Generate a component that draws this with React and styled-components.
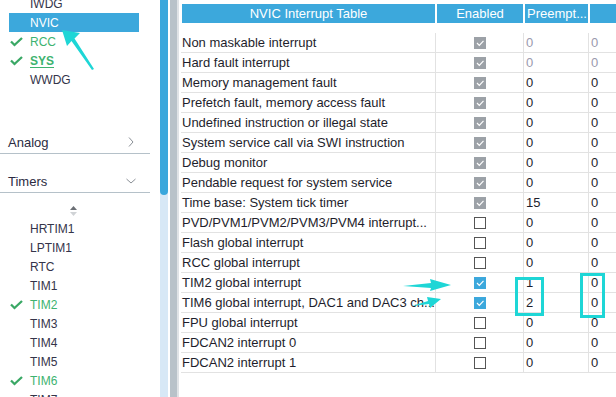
import React from 'react';
import styled, { createGlobalStyle } from 'styled-components';

const Global = createGlobalStyle`
  html, body { margin: 0; padding: 0; background: #fff; overflow: hidden; }
  body { font-family: "Liberation Sans", Arial, sans-serif; }
`;

const Shell = styled.div`
  position: relative;
  width: 616px;
  height: 397px;
  display: flex;
  overflow: hidden;
  background: #fff;
`;

const Sidebar = styled.div`
  width: 160px;
  flex: none;
  overflow: hidden;
  display: flex;
  flex-direction: column;
`;

const ItemList = styled.ul`
  list-style: none;
  margin: ${(p) => p.$mt || 0}px 0 0;
  padding: 0;
  flex: none;
`;

const Item = styled.li`
  display: flex;
  align-items: center;
  height: 19px;
  margin-left: 9px;
  width: 130px;
  padding-left: 1px;
  box-sizing: border-box;
  font-size: 12px;
  color: ${(p) => (p.$selected ? '#ffffff' : p.$ok ? '#3db370' : '#34344a')};
  background: ${(p) => (p.$selected ? '#3ca8dc' : 'transparent')};
  font-weight: ${(p) => (p.$bold ? 700 : 400)};
`;

const ItemLabel = styled.span`
  text-decoration: ${(p) => (p.$underline ? 'underline' : 'none')};
  text-decoration-thickness: 1px;
  text-underline-offset: 2px;
`;

const CheckSlot = styled.span`
  width: 20px;
  flex: none;
  display: flex;
  align-items: center;
`;

const Category = styled.div`
  display: flex;
  justify-content: space-between;
  align-items: center;
  width: 150px;
  box-sizing: border-box;
  height: 23px;
  padding: 0 14px 0 8px;
  margin-top: ${(p) => p.$mt}px;
  border-bottom: 1px solid #b5c1c9;
  font-size: 13px;
  color: #2b2b42;
  flex: none;
`;

const ScrollHint = styled.div`
  width: 146px;
  height: 26px;
  box-sizing: border-box;
  padding-top: 13px;
  display: flex;
  flex-direction: column;
  align-items: center;
  gap: 2px;
  flex: none;
`;

const ScrollTrack = styled.div`
  width: 8px;
  flex: none;
  background: #d7e8f6;
  margin-right: 2px;
`;

const ScrollThumb = styled.div`
  height: 195px;
  background: #3aa7dc;
  border-radius: 0 0 4px 4px;
`;

const Splitter = styled.div`
  width: 7px;
  flex: none;
  background: #b8c2c9;
  border-right: 2px solid #dfe3e6;
  margin-right: 2px;
`;

const TableArea = styled.div`
  flex: 1;
  min-width: 0;
  overflow: hidden;
  padding-top: 4px;
`;

const cols = '255px 88px 65px 80px';

const HeadRow = styled.div`
  display: grid;
  grid-template-columns: ${cols};
  height: 19px;
  margin-bottom: 10px;
`;

const HeadCell = styled.div`
  background: #3ca8dc;
  color: #fff;
  margin: 0 1px;
  font-size: 13px;
  line-height: 19px;
  text-align: ${(p) => p.$align || 'center'};
  padding-left: ${(p) => p.$pl || 0}px;
  white-space: nowrap;
  overflow: hidden;
`;

const Row = styled.div`
  display: grid;
  grid-template-columns: ${cols};
  height: 20px;
`;

const Cell = styled.div`
  box-sizing: border-box;
  height: 20px;
  border-bottom: 1px solid #e2e2e2;
  border-right: ${(p) => (p.$last ? 'none' : '1px solid #e2e2e2')};
  font-size: 13px;
  line-height: 19px;
  color: ${(p) => (p.$muted ? '#9a9aae' : '#1e1e2c')};
  padding-left: ${(p) => p.$pl || 0}px;
  white-space: nowrap;
  overflow: hidden;
  display: ${(p) => (p.$center ? 'flex' : 'block')};
  justify-content: center;
  align-items: center;
`;

const Box = styled.span`
  width: 12px;
  height: 12px;
  box-sizing: border-box;
  display: inline-flex;
  align-items: center;
  justify-content: center;
  background: ${(p) => (p.$state === 'locked' ? '#9ca1a7' : p.$state === 'on' ? '#3ca8dc' : '#ffffff')};
  border: ${(p) => (p.$state === 'off' ? '1.5px solid #555' : 'none')};
`;

const Overlay = styled.svg`
  position: absolute;
  left: 0;
  top: 0;
  pointer-events: none;
`;

const GreenCheck = () => (
  <svg width="13" height="10" viewBox="0 0 13 10">
    <polyline points="1,4.5 4.5,8 12,1" fill="none" stroke="#3aa865" strokeWidth="2.3" />
  </svg>
);

const Chevron = ({ down }) => (
  <svg width="10" height="10" viewBox="0 0 10 10">
    {down ? (
      <polyline points="0.5,3 5,7 9.5,3" fill="none" stroke="#8a8f96" strokeWidth="1" />
    ) : (
      <polyline points="3,0.5 7,5 3,9.5" fill="none" stroke="#8a8f96" strokeWidth="1" />
    )}
  </svg>
);

const Checkbox = ({ state }) => (
  <Box $state={state}>
    {state !== 'off' && (
      <svg width="12" height="12" viewBox="0 0 12 12">
        <polyline points="3,6 5.3,8.3 9.5,3.8" fill="none" stroke="#fff" strokeWidth="1.2" />
      </svg>
    )}
  </Box>
);

const sysItems = [
  { name: 'IWDG' },
  { name: 'NVIC', selected: true },
  { name: 'RCC', ok: true },
  { name: 'SYS', ok: true, bold: true },
  { name: 'WWDG' },
];

const timerItems = [
  { name: 'HRTIM1' },
  { name: 'LPTIM1' },
  { name: 'RTC' },
  { name: 'TIM1' },
  { name: 'TIM2', ok: true },
  { name: 'TIM3' },
  { name: 'TIM4' },
  { name: 'TIM5' },
  { name: 'TIM6', ok: true },
  { name: 'TIM7' },
];

const rows = [
  ['Non maskable interrupt', 'locked', '0', '0', true],
  ['Hard fault interrupt', 'locked', '0', '0', true],
  ['Memory management fault', 'locked', '0', '0'],
  ['Prefetch fault, memory access fault', 'locked', '0', '0'],
  ['Undefined instruction or illegal state', 'locked', '0', '0'],
  ['System service call via SWI instruction', 'locked', '0', '0'],
  ['Debug monitor', 'locked', '0', '0'],
  ['Pendable request for system service', 'locked', '0', '0'],
  ['Time base: System tick timer', 'locked', '15', '0'],
  ['PVD/PVM1/PVM2/PVM3/PVM4 interrupt...', 'off', '0', '0'],
  ['Flash global interrupt', 'off', '0', '0'],
  ['RCC global interrupt', 'off', '0', '0'],
  ['TIM2 global interrupt', 'on', '1', '0'],
  ['TIM6 global interrupt, DAC1 and DAC3 ch...', 'on', '2', '0'],
  ['FPU global interrupt', 'off', '0', '0'],
  ['FDCAN2 interrupt 0', 'off', '0', '0'],
  ['FDCAN2 interrupt 1', 'off', '0', '0'],
];

const renderItem = (it) => (
  <Item key={it.name} $selected={it.selected} $ok={it.ok} $bold={it.bold}>
    <CheckSlot>{it.ok && <GreenCheck />}</CheckSlot>
    <ItemLabel $underline={it.bold}>{it.name}</ItemLabel>
  </Item>
);

export default function App() {
  return (
    <>
      <Global />
      <Shell>
        <Sidebar>
          <ItemList $mt={-6}>{sysItems.map(renderItem)}</ItemList>
          <Category $mt={42}>
            <span>Analog</span>
            <Chevron />
          </Category>
          <Category $mt={16}>
            <span>Timers</span>
            <Chevron down />
          </Category>
          <ScrollHint>
            <svg width="7" height="4" viewBox="0 0 7 4">
              <polygon points="0,4 3.5,0 7,4" fill="#6b6f75" />
            </svg>
            <svg width="7" height="4" viewBox="0 0 7 4">
              <polygon points="0,0 3.5,4 7,0" fill="#d0d3d6" />
            </svg>
          </ScrollHint>
          <ItemList>{timerItems.map(renderItem)}</ItemList>
        </Sidebar>
        <ScrollTrack>
          <ScrollThumb />
        </ScrollTrack>
        <Splitter />
        <TableArea>
          <HeadRow>
            <HeadCell>NVIC Interrupt Table</HeadCell>
            <HeadCell>Enabled</HeadCell>
            <HeadCell $align="left" $pl={2}>Preempt...</HeadCell>
            <HeadCell />
          </HeadRow>
          {rows.map(([name, state, pre, sub, muted]) => (
            <Row key={name}>
              <Cell $pl={1}>{name}</Cell>
              <Cell $center>
                <Checkbox state={state} />
              </Cell>
              <Cell $pl={2} $muted={muted}>{pre}</Cell>
              <Cell $pl={2} $muted={muted} $last>{sub}</Cell>
            </Row>
          ))}
        </TableArea>
        <Overlay width="616" height="397" viewBox="0 0 616 397">
          <g fill="#1ed6d6">
            <polygon points="62,30 80,33 74.5,38.5 94,69 92,70 71.5,41 67,46" />
            <polygon points="403,286 431,283 430,279 451,285 430,291 431,288" />
            <polygon points="412,306 428,301 427,297 441,299 430,308 429,304" />
          </g>
          <g fill="none" stroke="#1ed6d6" strokeWidth="3">
            <rect x="516.5" y="278.5" width="26" height="36" />
            <rect x="581.5" y="274.5" width="22" height="42" />
          </g>
        </Overlay>
      </Shell>
    </>
  );
}
